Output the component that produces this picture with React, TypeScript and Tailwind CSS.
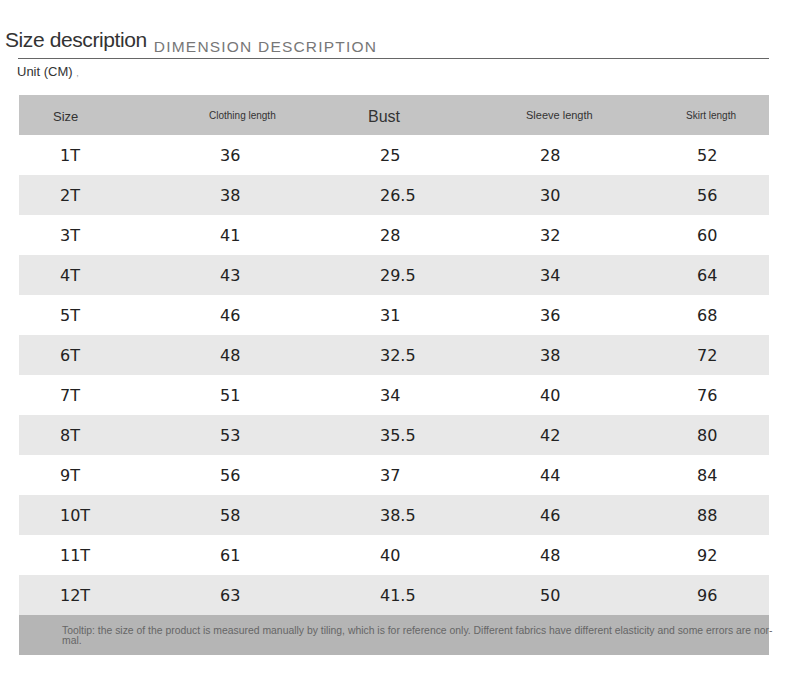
import React from 'react';

const rows: [string, string, string, string, string][] = [
  ['1T', '36', '25', '28', '52'],
  ['2T', '38', '26.5', '30', '56'],
  ['3T', '41', '28', '32', '60'],
  ['4T', '43', '29.5', '34', '64'],
  ['5T', '46', '31', '36', '68'],
  ['6T', '48', '32.5', '38', '72'],
  ['7T', '51', '34', '40', '76'],
  ['8T', '53', '35.5', '42', '80'],
  ['9T', '56', '37', '44', '84'],
  ['10T', '58', '38.5', '46', '88'],
  ['11T', '61', '40', '48', '92'],
  ['12T', '63', '41.5', '50', '96'],
];

export default function App() {
  return (
    <div className="w-[790px] h-[677px] bg-white pt-[29px] font-['Liberation_Sans',Arial,sans-serif] text-[#333]">
      <div className="ml-[18px] mr-[21px] flex items-end border-b border-[#666] pb-[3px]">
        <span className="-ml-[13px] mb-[4px] text-[21px] leading-[22px] tracking-[-0.4px] text-[#333]">Size description</span>
        <span className="ml-[7px] text-[15.5px] leading-[16px] tracking-[1.2px] text-[#777]">DIMENSION DESCRIPTION</span>
      </div>
      <div className="pl-[17px] mt-[5px] text-[13px] leading-[16px] text-[#333]">
        Unit (CM) <span className="text-[9px] text-[#999]">,</span>
      </div>

      <div className="ml-[19px] mt-[14px] w-[750px]">
        <div className="flex h-10 items-center bg-[#c4c4c4] text-[#333]">
          <div className="w-[160px] pl-[34px] pt-[3px] text-[13px]">Size</div>
          <div className="w-[160px] pl-[30px] text-[10px]">Clothing length</div>
          <div className="w-[160px] pl-[29px] pt-[3px] text-[16px]">Bust</div>
          <div className="w-[160px] pl-[27px] text-[11px]">Sleeve length</div>
          <div className="w-[110px] pl-[27px] text-[10px]">Skirt length</div>
        </div>
        {rows.map((r, i) => (
          <div
            key={r[0]}
            className={`flex h-10 items-center pt-[2px] font-['DejaVu_Sans',Verdana,sans-serif] text-[16px] text-[#222] ${i % 2 === 1 ? 'bg-[#e8e8e8]' : 'bg-white'}`}
          >
            <div className="w-[160px] pl-[41px]">{r[0]}</div>
            <div className="w-[160px] pl-[41px]">{r[1]}</div>
            <div className="w-[160px] pl-[41px]">{r[2]}</div>
            <div className="w-[160px] pl-[41px]">{r[3]}</div>
            <div className="w-[110px] pl-[38px]">{r[4]}</div>
          </div>
        ))}
        <div className="h-10 bg-[#b5b5b5] pl-[43px] pt-[11px] text-[10.4px] leading-[10px] text-[#666]">
          <div className="whitespace-nowrap">
            Tooltip: the size of the product is measured manually by tiling, which is for reference only. Different fabrics have different elasticity and some errors are nor-
          </div>
          <div>mal.</div>
        </div>
      </div>
    </div>
  );
}
